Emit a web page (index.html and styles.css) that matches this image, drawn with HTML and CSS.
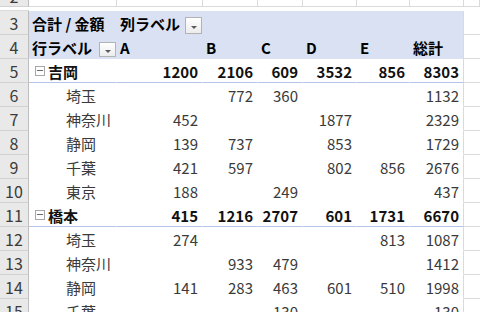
FILE: index.html
```html
<!DOCTYPE html>
<html lang="ja">
<head>
<meta charset="utf-8">
<title>Pivot</title>
<link rel="stylesheet" href="styles.css">
</head>
<body>
<div class="sheet">
  <div class="row r-plain">
    <div class="rh">2</div>
    <div class="c"></div><div class="c"></div><div class="c"></div><div class="c"></div><div class="c"></div><div class="c"></div><div class="c"></div><div class="c tot"></div><div class="c out"></div>
  </div>
  <div class="row r-head">
    <div class="rh">3</div>
    <div class="c">合計 / 金額</div>
    <div class="c filter">列ラベル<span class="dd"></span></div>
    <div class="c"></div><div class="c"></div><div class="c"></div><div class="c"></div><div class="c tot"></div><div class="c out"></div>
  </div>
  <div class="row r-head">
    <div class="rh">4</div>
    <div class="c filter f2">行ラベル<span class="dd"></span></div>
    <div class="c">A</div><div class="c">B</div><div class="c">C</div><div class="c">D</div><div class="c">E</div><div class="c tot">総計</div><div class="c out"></div>
  </div>
  <div class="row r-sub">
    <div class="rh">5</div>
    <div class="c grp"><span class="tog"></span>吉岡</div>
    <div class="c num">1200</div><div class="c num">2106</div><div class="c num">609</div><div class="c num">3532</div><div class="c num">856</div><div class="c num tot">8303</div><div class="c out"></div>
  </div>
  <div class="row r-item">
    <div class="rh">6</div>
    <div class="c ind">埼玉</div>
    <div class="c num"></div><div class="c num">772</div><div class="c num">360</div><div class="c num"></div><div class="c num"></div><div class="c num tot">1132</div><div class="c out"></div>
  </div>
  <div class="row r-item">
    <div class="rh">7</div>
    <div class="c ind">神奈川</div>
    <div class="c num">452</div><div class="c num"></div><div class="c num"></div><div class="c num">1877</div><div class="c num"></div><div class="c num tot">2329</div><div class="c out"></div>
  </div>
  <div class="row r-item">
    <div class="rh">8</div>
    <div class="c ind">静岡</div>
    <div class="c num">139</div><div class="c num">737</div><div class="c num"></div><div class="c num">853</div><div class="c num"></div><div class="c num tot">1729</div><div class="c out"></div>
  </div>
  <div class="row r-item">
    <div class="rh">9</div>
    <div class="c ind">千葉</div>
    <div class="c num">421</div><div class="c num">597</div><div class="c num"></div><div class="c num">802</div><div class="c num">856</div><div class="c num tot">2676</div><div class="c out"></div>
  </div>
  <div class="row r-item">
    <div class="rh">10</div>
    <div class="c ind">東京</div>
    <div class="c num">188</div><div class="c num"></div><div class="c num">249</div><div class="c num"></div><div class="c num"></div><div class="c num tot">437</div><div class="c out"></div>
  </div>
  <div class="row r-sub">
    <div class="rh">11</div>
    <div class="c grp"><span class="tog"></span>橋本</div>
    <div class="c num">415</div><div class="c num">1216</div><div class="c num">2707</div><div class="c num">601</div><div class="c num">1731</div><div class="c num tot">6670</div><div class="c out"></div>
  </div>
  <div class="row r-item">
    <div class="rh">12</div>
    <div class="c ind">埼玉</div>
    <div class="c num">274</div><div class="c num"></div><div class="c num"></div><div class="c num"></div><div class="c num">813</div><div class="c num tot">1087</div><div class="c out"></div>
  </div>
  <div class="row r-item">
    <div class="rh">13</div>
    <div class="c ind">神奈川</div>
    <div class="c num"></div><div class="c num">933</div><div class="c num">479</div><div class="c num"></div><div class="c num"></div><div class="c num tot">1412</div><div class="c out"></div>
  </div>
  <div class="row r-item">
    <div class="rh">14</div>
    <div class="c ind">静岡</div>
    <div class="c num">141</div><div class="c num">283</div><div class="c num">463</div><div class="c num">601</div><div class="c num">510</div><div class="c num tot">1998</div><div class="c out"></div>
  </div>
  <div class="row r-item">
    <div class="rh">15</div>
    <div class="c ind">千葉</div>
    <div class="c num"></div><div class="c num"></div><div class="c num">130</div><div class="c num"></div><div class="c num"></div><div class="c num tot">130</div><div class="c out"></div>
  </div>
</div>
</body>
</html>
```

FILE: styles.css
```css
* {
  box-sizing: border-box;
  margin: 0;
  padding: 0;
}

html, body {
  width: 480px;
  height: 312px;
  overflow: hidden;
  background: #ffffff;
}

body {
  font-family: "Noto Sans CJK JP", "Noto Sans", sans-serif;
  font-size: 15px;
  color: #3a3a3a;
}

.sheet {
  margin-top: -13px;
}

.row {
  display: grid;
  grid-template-columns: 29px 88px 86px 55px 45px 54px 53px 54px 1fr;
  height: 24px;
}

.rh {
  display: flex;
  align-items: center;
  justify-content: center;
  background: #e9e9e9;
  border-right: 1px solid #bdbdbd;
  border-bottom: 1px solid #d2d2d2;
  color: #3b3b3b;
  font-size: 16px;
  line-height: 1;
}

.c {
  display: flex;
  align-items: center;
  padding: 1px 4px 0 3px;
  border-right: 1px solid #dadada;
  border-bottom: 1px solid #dadada;
  white-space: nowrap;
  line-height: 1;
}

.num {
  justify-content: flex-end;
}

.r-head .c {
  background: #d9e1f2;
  border-color: #d9e1f2;
  font-weight: bold;
  color: #000;
}

.r-sub .c {
  border-right-color: #ffffff;
  border-bottom-color: #b4c6e7;
  font-weight: bold;
  color: #111;
}

.r-item .c {
  border-color: #ffffff;
}

.row .c.tot {
  border-right-color: #dadada;
}

.row .c.out {
  background: #ffffff;
  border-right: none;
  border-bottom-color: #dadada;
}

.filter {
  justify-content: space-between;
  padding-right: 0;
}

.dd {
  align-self: flex-end;
  width: 17px;
  height: 17px;
  border: 1px solid #b3b3b3;
  background: linear-gradient(#ffffff, #ececec);
  display: flex;
  align-items: center;
  justify-content: center;
}

.dd::after {
  content: "";
  margin-top: 3px;
  border-left: 3px solid transparent;
  border-right: 3px solid transparent;
  border-top: 3px solid #5a5a5a;
}

.f2 .dd {
  width: 17px;
  height: 15px;
  margin-bottom: 1px;
}

.grp {
  padding-left: 6px;
}

.tog {
  position: relative;
  width: 10px;
  height: 10px;
  margin-right: 3px;
  border: 1px solid #a8a8a8;
  background: #ffffff;
}

.tog::after {
  content: "";
  position: absolute;
  left: 1px;
  right: 1px;
  top: 3px;
  height: 1px;
  background: #6b6b6b;
}

.ind {
  padding-left: 37px;
}
```
